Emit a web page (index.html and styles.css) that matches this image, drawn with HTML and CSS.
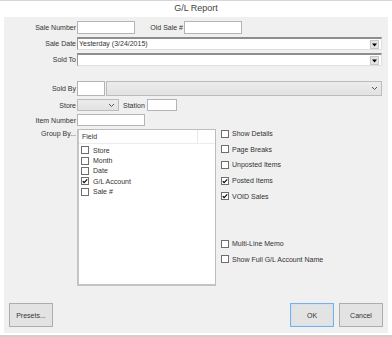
FILE: index.html
```html
<!DOCTYPE html>
<html lang="en">
<head>
    <meta charset="UTF-8">
    <meta name="viewport" content="width=device-width, initial-scale=1.0">
    <title>G/L Report</title>
    <link rel="stylesheet" href="styles.css">
</head>
<body>
    <div class="window">
        <div class="titlebar">G/L Report</div>
        <div class="panel">
            <div class="row row-first">
                <label class="lbl">Sale Number</label>
                <span class="input w-num"></span>
                <label class="lbl lbl-old">Old Sale #</label>
                <span class="input w-num"></span>
            </div>
            <div class="row row-gap">
                <label class="lbl">Sale Date</label>
                <span class="input sunken w-wide">Yesterday (3/24/2015)
                    <span class="drop"><svg viewBox="0 0 7 6" width="7" height="6"><path d="M1 1.5h5L3.5 4.5z" fill="#000"/></svg></span>
                </span>
            </div>
            <div class="row row-gap">
                <label class="lbl">Sold To</label>
                <span class="input sunken w-wide">
                    <span class="drop"><svg viewBox="0 0 7 6" width="7" height="6"><path d="M1 1.5h5L3.5 4.5z" fill="#000"/></svg></span>
                </span>
            </div>

            <div class="row row-soldby">
                <label class="lbl">Sold By</label>
                <span class="input w-short tall"></span>
                <span class="combo w-soldby tall">
                    <svg class="chev" viewBox="0 0 7 5" width="7" height="5"><path d="M1 1l2.5 2.5L6 1" stroke="#555" stroke-width="1" fill="none"/></svg>
                </span>
            </div>
            <div class="row row-store">
                <label class="lbl">Store</label>
                <span class="combo w-store">
                    <svg class="chev" viewBox="0 0 7 5" width="7" height="5"><path d="M1 1l2.5 2.5L6 1" stroke="#555" stroke-width="1" fill="none"/></svg>
                </span>
                <label class="lbl-station">Station</label>
                <span class="input w-station"></span>
            </div>
            <div class="row row-item">
                <label class="lbl">Item Number</label>
                <span class="input w-item"></span>
            </div>

            <div class="group">
                <label class="lbl lbl-top">Group By...</label>
                <div class="listbox">
                    <div class="list-head">
                        <span class="col-field">Field</span>
                        <span class="col-rest"></span>
                    </div>
                    <ul class="list-items">
                        <li><span class="chk"></span>Store</li>
                        <li><span class="chk"></span>Month</li>
                        <li><span class="chk"></span>Date</li>
                        <li><span class="chk"><svg viewBox="0 0 8 8" width="6" height="6"><path d="M1 4.2l1.8 1.9L7 1.8" stroke="#000" stroke-width="1.5" fill="none"/></svg></span>G/L Account</li>
                        <li><span class="chk"></span>Sale #</li>
                    </ul>
                </div>
                <ul class="options">
                    <li><span class="chk"></span>Show Details</li>
                    <li><span class="chk"></span>Page Breaks</li>
                    <li><span class="chk"></span>Unposted Items</li>
                    <li><span class="chk"><svg viewBox="0 0 8 8" width="6" height="6"><path d="M1 4.2l1.8 1.9L7 1.8" stroke="#000" stroke-width="1.5" fill="none"/></svg></span>Posted Items</li>
                    <li><span class="chk"><svg viewBox="0 0 8 8" width="6" height="6"><path d="M1 4.2l1.8 1.9L7 1.8" stroke="#000" stroke-width="1.5" fill="none"/></svg></span>VOID Sales</li>
                    <li class="opt-spacer"><span class="chk"></span>Multi-Line Memo</li>
                    <li><span class="chk"></span>Show Full G/L Account Name</li>
                </ul>
            </div>

            <div class="buttons">
                <button class="btn">Presets...</button>
                <span class="spacer"></span>
                <button class="btn btn-default">OK</button>
                <button class="btn">Cancel</button>
            </div>
        </div>
    </div>
</body>
</html>
```

FILE: styles.css
```css
body {
    margin: 0;
    font-family: "Liberation Sans", Arial, sans-serif;
    font-size: 7px;
    color: #333;
    background-color: #fff;
}

.window {
    width: 392px;
    height: 337px;
    box-sizing: border-box;
    border-top: 1px solid #d6d6d6;
    border-bottom: 2px solid #d0d0d0;
    background-color: #fff;
}

.titlebar {
    height: 16px;
    line-height: 15px;
    text-align: center;
    font-size: 9px;
    color: #444;
}

.panel {
    margin: 0 4px;
    height: 316px;
    background-color: #f0f0f0;
    display: flex;
    flex-direction: column;
}

.row {
    display: flex;
    align-items: center;
    height: 13px;
}

.row-first {
    margin-top: 4px;
}

.row-gap {
    margin-top: 3px;
}

.row-soldby {
    margin-top: 15px;
    height: 15px;
}

.row-store {
    margin-top: 3px;
    height: 12px;
}

.row-item {
    margin-top: 3px;
    height: 12px;
}

.lbl {
    width: 72px;
    padding-right: 1px;
    text-align: right;
    white-space: nowrap;
    flex-shrink: 0;
}

.lbl-old {
    width: 48px;
}

.lbl-top {
    align-self: flex-start;
    margin-top: 1px;
}

.input {
    position: relative;
    display: block;
    box-sizing: border-box;
    height: 100%;
    background: #fff;
    border: 1px solid #b4b4b4;
    line-height: 11px;
    padding-left: 1px;
    white-space: nowrap;
}

.input.sunken {
    border-top: 2px solid #8e8e8e;
    border-left: 1px solid #9a9a9a;
    border-right: 1px solid #dedede;
    border-bottom: 1px solid #dedede;
    line-height: 10px;
}

.w-num {
    width: 58px;
}

.w-wide {
    width: 305px;
}

.w-short {
    width: 28px;
}

.w-soldby {
    width: 276px;
    margin-left: 1px;
}

.w-store {
    width: 42px;
}

.w-station {
    width: 30px;
}

.w-item {
    width: 68px;
}

.tall {
    height: 15px;
}

.drop {
    position: absolute;
    right: 2px;
    top: 1px;
    width: 7px;
    height: 7px;
    background: #e4e4e4;
    border: 1px solid #c8c8c8;
    display: flex;
    align-items: center;
    justify-content: center;
}

.combo {
    display: flex;
    align-items: center;
    justify-content: flex-end;
    box-sizing: border-box;
    height: 100%;
    background: linear-gradient(#ececec, #e2e2e2);
    border: 1px solid #bcbcbc;
    padding-right: 3px;
}

.chev {
    display: block;
}

.lbl-station {
    margin-left: 4px;
    width: 24px;
}

.group {
    display: flex;
    margin-top: 3px;
}

.listbox {
    box-sizing: border-box;
    width: 139px;
    height: 157px;
    background: #fff;
    border: 1px solid #bdbdbd;
    border-left: 2px solid #c4c4c4;
    border-bottom: 2px solid #c4c4c4;
}

.list-head {
    display: flex;
    height: 13px;
    line-height: 14px;
    border-bottom: 1px solid #ececec;
}

.col-field {
    width: 119px;
    padding-left: 3px;
    box-sizing: border-box;
    border-right: 1px solid #e8e8e8;
}

.list-items,
.options {
    list-style: none;
    margin: 0;
    padding: 0;
}

.list-items {
    padding-top: 1px;
}

.list-items li {
    display: flex;
    align-items: center;
    height: 10.4px;
    padding-left: 2px;
}

.chk {
    display: flex;
    align-items: center;
    justify-content: center;
    box-sizing: border-box;
    width: 8px;
    height: 8px;
    margin-right: 4px;
    background: #fff;
    border: 1px solid #6e6e6e;
    flex-shrink: 0;
}

.options {
    margin-left: 5px;
    margin-top: -3px;
}

.options li {
    display: flex;
    align-items: center;
    height: 15.6px;
}

.options .opt-spacer {
    margin-top: 32px;
}

.options .chk {
    margin-right: 3px;
}

.buttons {
    display: flex;
    align-items: center;
    margin-top: auto;
    margin-bottom: 6px;
    padding: 0 5px;
    gap: 5px;
}

.spacer {
    flex: 1;
}

.btn {
    width: 44px;
    height: 24px;
    padding: 0;
    font-family: inherit;
    font-size: 7px;
    color: #333;
    background: #e3e3e3;
    border: 1px solid #adadad;
}

.btn-default {
    border: 1px solid #7aaee6;
    box-shadow: inset 0 0 0 1px #cfe2f7;
}
```
